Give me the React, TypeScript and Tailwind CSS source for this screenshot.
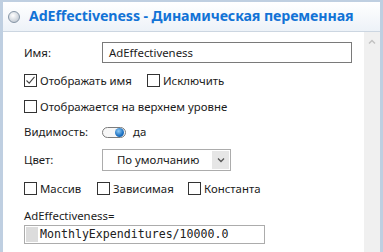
import React from "react";

const Check = ({ checked = false }: { checked?: boolean }) => (
  <div className="w-[13px] h-[13px] border border-[#333333] bg-white flex items-center justify-center shrink-0">
    {checked && (
      <svg width="11" height="11" viewBox="0 0 11 11">
        <path d="M1.5 5.5 L4.2 8.2 L9.5 1.8" fill="none" stroke="#444" strokeWidth="1.1" />
      </svg>
    )}
  </div>
);

const CB = ({ label, checked = false, w }: { label: string; checked?: boolean; w?: string }) => (
  <div className={`flex items-center gap-[3px] ${w ?? ""}`}>
    <Check checked={checked} />
    <span className="leading-none">{label}</span>
  </div>
);

export default function App() {
  return (
    <div
      className="w-[383px] h-[252px] bg-white border-l-[3px] border-t-[2px] border-r-[3px] border-[#bfcfe1] flex flex-col overflow-hidden text-[#1b1b1b] text-[11.4px]"
      style={{ fontFamily: '"Noto Sans", sans-serif' }}
    >
      <div className="h-[30px] shrink-0 bg-gradient-to-b from-white to-[#edf2f8] border-b border-[#ccd6e1] flex items-center pl-[5px]">
        <div className="w-[12px] h-[12px] rounded-full border border-[#8595a6] bg-[radial-gradient(circle_at_40%_35%,#ffffff,#c9d0d8_70%,#aeb7c1)] mr-[9px]" />
        <span className="font-bold text-[14.2px] text-[#1273d6] leading-none tracking-[-0.1px]">
          AdEffectiveness - Динамическая переменная
        </span>
      </div>
      <div className="flex flex-1">
        <div className="flex-1 pl-[21px] flex flex-col">
          <div className="mt-[10px] h-[21px] flex items-center">
            <span className="w-[78px]">Имя:</span>
            <div className="w-[250px] h-[21px] border border-[#7a7a7a] flex items-center pl-[6px]">AdEffectiveness</div>
          </div>
          <div className="mt-[11px] h-[13px] flex items-center">
            <CB label="Отображать имя" checked w="w-[123px]" />
            <CB label="Исключить" />
          </div>
          <div className="mt-[13px] h-[13px] flex items-center">
            <CB label="Отображается на верхнем уровне" />
          </div>
          <div className="mt-[13px] h-[12px] flex items-center">
            <span className="w-[78px]">Видимость:</span>
            <div className="w-[24px] h-[11px] rounded-full border border-[#7d7d7d] bg-[#f7f7f7] flex items-center justify-end pr-[1px]">
              <div className="w-[9px] h-[9px] rounded-full bg-[radial-gradient(circle_at_40%_35%,#8fcaf5,#1a6fc0_60%,#0d4f93)]" />
            </div>
            <span className="ml-[7px]">да</span>
          </div>
          <div className="mt-[11px] h-[22px] flex items-center">
            <span className="w-[78px]">Цвет:</span>
            <div className="w-[129px] h-[22px] border border-[#acacac] bg-white flex items-center pl-[14px] pr-[1px]">
              <span className="flex-1">По умолчанию</span>
              <div className="w-[17px] h-[18px] bg-[#e6e6e6] flex items-center justify-center">
                <svg width="8" height="6" viewBox="0 0 8 6">
                  <path d="M1 1.5 L4 4.5 L7 1.5" fill="none" stroke="#555" strokeWidth="1.3" />
                </svg>
              </div>
            </div>
          </div>
          <div className="mt-[11px] h-[13px] flex items-center">
            <CB label="Массив" w="w-[73px]" />
            <CB label="Зависимая" w="w-[91px]" />
            <CB label="Константа" />
          </div>
          <div className="mt-[13px] h-[16px] flex items-center">AdEffectiveness=</div>
          <div className="mt-[1px] w-[241px] h-[19px] border border-[#acacac] flex items-center pl-[1px]">
            <div className="w-[12px] h-[15px] bg-[#dcdcdc]" />
            <span
              className="ml-[2px] text-[11.6px] text-[#202020]"
              style={{ fontFamily: '"DejaVu Sans Mono", monospace' }}
            >
              MonthlyExpenditures/10000.0
            </span>
          </div>
        </div>
        <div className="w-[16px] bg-[#f0f0f0] flex justify-center pt-[7px]">
          <svg width="8" height="6" viewBox="0 0 8 6">
            <path d="M1 4.5 L4 1.5 L7 4.5" fill="none" stroke="#c2c2c2" strokeWidth="1.5" />
          </svg>
        </div>
      </div>
    </div>
  );
}
